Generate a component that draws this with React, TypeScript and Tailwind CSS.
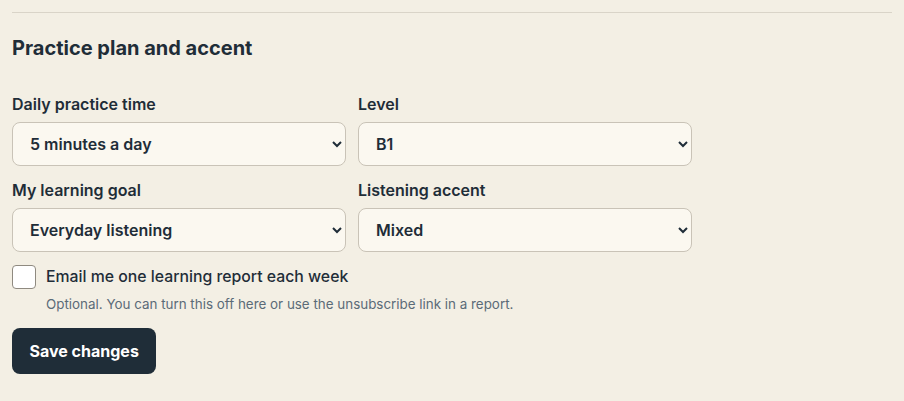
import React, { useState } from 'react'

const fieldClass =
  'h-[44px] w-full rounded-lg border border-[#c9c3b7] bg-[#fbf8f0] pl-[13px] pr-2 text-[16px] font-semibold text-[#1f2d38]'

const App: React.FC = () => {
  const [time, setTime] = useState('5')
  const [level, setLevel] = useState('B1')
  const [goal, setGoal] = useState('everyday')
  const [accent, setAccent] = useState('mixed')
  const [weekly, setWeekly] = useState(false)

  return (
    <div className="min-h-[401px] bg-[#f3efe4] px-3 pt-3 font-['Inter',sans-serif] text-[#1f2d38]">
      <div className="border-t border-[#d9d4c8]" />
      <h2 className="mt-[21px] text-[20px] font-bold leading-[28px]">Practice plan and accent</h2>

      <div className="mt-[32px] grid w-[680px] grid-cols-2 gap-x-3 gap-y-[14px]">
        <label className="flex flex-col gap-[8px]">
          <span className="text-[16px] font-semibold leading-[20px]">Daily practice time</span>
          <select value={time} onChange={e => setTime(e.target.value)} className={fieldClass}>
            <option value="5">5 minutes a day</option>
            <option value="10">10 minutes a day</option>
            <option value="15">15 minutes a day</option>
          </select>
        </label>
        <label className="flex flex-col gap-[8px]">
          <span className="text-[16px] font-semibold leading-[20px]">Level</span>
          <select value={level} onChange={e => setLevel(e.target.value)} className={fieldClass}>
            <option value="A2">A2</option>
            <option value="B1">B1</option>
            <option value="B2">B2</option>
          </select>
        </label>
        <label className="flex flex-col gap-[8px]">
          <span className="text-[16px] font-semibold leading-[20px]">My learning goal</span>
          <select value={goal} onChange={e => setGoal(e.target.value)} className={fieldClass}>
            <option value="everyday">Everyday listening</option>
            <option value="work">Work and meetings</option>
            <option value="travel">Travel</option>
          </select>
        </label>
        <label className="flex flex-col gap-[8px]">
          <span className="text-[16px] font-semibold leading-[20px]">Listening accent</span>
          <select value={accent} onChange={e => setAccent(e.target.value)} className={fieldClass}>
            <option value="mixed">Mixed</option>
            <option value="us">American</option>
            <option value="uk">British</option>
          </select>
        </label>
      </div>

      <label className="mt-[13px] flex items-center gap-[10px]">
        <input
          type="checkbox"
          checked={weekly}
          onChange={e => setWeekly(e.target.checked)}
          className="h-6 w-6 appearance-none rounded-[4px] border border-[#8f8a80] bg-white"
        />
        <span className="text-[15.8px] font-medium leading-[20px]">Email me one learning report each week</span>
      </label>
      <p className="ml-[34px] mt-[7px] text-[13.4px] leading-[16px] text-[#5b6b78]">
        Optional. You can turn this off here or use the unsubscribe link in a report.
      </p>

      <button className="mt-[16px] h-[46px] rounded-lg bg-[#1f2d38] px-[17.5px] text-[16px] font-bold text-white">
        Save changes
      </button>
    </div>
  )
}

export default App
